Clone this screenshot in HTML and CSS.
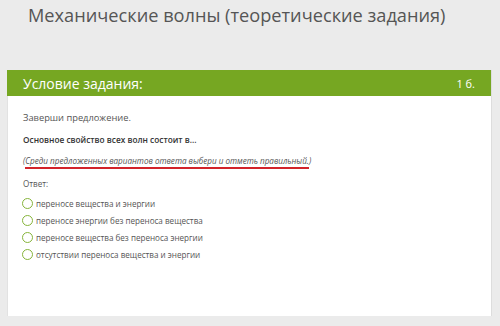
FILE: index.html
```html
<!doctype html>
<html lang="ru">
<head>
    <meta charset="UTF-8">
    <title>Механические волны</title>
    <link rel="stylesheet" href="styles.css">
</head>
<body>
<h1 class="title">Механические волны (теоретические задания)</h1>
<div class="card">
    <div class="card-head">
        <span class="head-title">Условие задания:</span>
        <span class="points">1 б.</span>
    </div>
    <div class="card-body">
        <p class="line intro">Заверши предложение.</p>
        <p class="line question">Основное свойство всех волн состоит в...</p>
        <p class="line hint">(<span class="hint-text">Среди предложенных вариантов ответа выбери и отметь правильный.</span>)</p>
        <p class="line answer-label">Ответ:</p>
        <ul class="options">
            <li><span class="radio"></span>переносе вещества и энергии</li>
            <li><span class="radio"></span>переносе энергии без переноса вещества</li>
            <li><span class="radio"></span>переносе вещества без переноса энергии</li>
            <li><span class="radio"></span>отсутствии переноса вещества и энергии</li>
        </ul>
    </div>
</div>
</body>
</html>
```
FILE: styles.css
```css
* {
    margin: 0;
    padding: 0;
    box-sizing: border-box;
}

body {
    background-color: #ebebeb;
    font-family: "Open Sans", "Noto Sans", sans-serif;
    color: #444;
}

.title {
    font-size: 18.2px;
    font-weight: normal;
    color: #555;
    line-height: 26px;
    padding: 2px 0 0 28px;
    height: 70px;
}

.card {
    margin: 0 8px 0 7px;
    height: 246px;
    background-color: #fff;
    border-left: 1px solid #e2e2e2;
    border-right: 1px solid #ddd;
}

.card-head {
    height: 26px;
    background-color: #76a722;
    color: #fff;
    display: flex;
    justify-content: space-between;
    align-items: center;
    padding: 0 16px 0 16px;
    margin-left: -1px;
}

.head-title {
    font-size: 14px;
}

.points {
    font-size: 11px;
}

.card-body {
    padding: 16px 16px 0 15px;
    font-size: 8.1px;
}

.line {
    line-height: 12px;
    margin-bottom: 10px;
}

.intro {
    font-size: 9.3px;
    color: #555;
}

.question {
    font-weight: 600;
    font-size: 8.3px;
    color: #333;
    margin-bottom: 9px;
}

.hint {
    font-style: italic;
    color: #555;
    margin-bottom: 11px;
}

.hint-text {
    border-bottom: 2px solid #d2232a;
    padding-bottom: 1px;
}

.answer-label {
    color: #555;
    margin-bottom: 5px;
}

.options {
    list-style: none;
}

.options li {
    display: flex;
    align-items: center;
    height: 17px;
    color: #555;
}

.radio {
    width: 11px;
    height: 11px;
    border: 1.5px solid #86b43a;
    border-radius: 50%;
    margin-right: 3px;
    margin-left: -1px;
}
```
